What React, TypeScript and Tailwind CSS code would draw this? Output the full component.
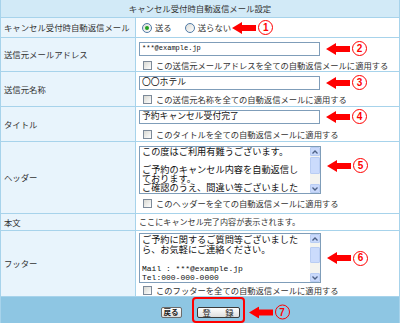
import React from "react";

const BORDER = "border-[#a7d3eb]";

function Arrow() {
  return (
    <svg width="24" height="12" viewBox="0 0 24 12" className="block shrink-0">
      <polygon points="0,6 10,0 10,3 24,3 24,9 10,9 10,12" fill="#ff0000" />
    </svg>
  );
}

function Num({ n }: { n: string }) {
  return (
    <div className="w-[15px] h-[15px] shrink-0 rounded-full border-[1.5px] border-[#ff0000] text-[#ff0000] font-['Liberation_Sans',sans-serif] font-bold text-[10px] leading-none flex items-center justify-center">
      {n}
    </div>
  );
}

function Mark({ n }: { n: string }) {
  return (
    <div className="flex items-center gap-[2px] shrink-0">
      <Arrow />
      <Num n={n} />
    </div>
  );
}

function Checkbox() {
  return (
    <div className="w-[9px] h-[9px] shrink-0 border border-[#7d8a99] bg-gradient-to-br from-[#d8d8d2] to-white" />
  );
}

function CheckRow({ text }: { text: string }) {
  return (
    <div className="flex items-center h-[11px] pl-[4px] gap-[4px] whitespace-nowrap">
      <Checkbox />
      <span className="text-[8.3px] leading-none text-[#333]">{text}</span>
    </div>
  );
}

function Radio({ checked }: { checked?: boolean }) {
  return (
    <div className="w-[10px] h-[10px] shrink-0 rounded-full border border-[#4f7aa6] bg-gradient-to-br from-[#dcdcd7] to-white flex items-center justify-center">
      {checked ? <div className="w-[4px] h-[4px] rounded-full bg-[#21a121]" /> : null}
    </div>
  );
}

function Input({ children, mono }: { children: React.ReactNode; mono?: boolean }) {
  return (
    <div
      className={
        mono
          ? "w-[181px] h-[14px] shrink-0 border border-[#7f9db9] bg-white pl-[2px] flex items-center font-['Liberation_Mono',monospace] text-[7px] text-[#111] leading-none"
          : "w-[181px] h-[14px] shrink-0 border border-[#7f9db9] bg-white pl-[2px] flex items-center text-[8.8px] text-[#111] leading-none"
      }
    >
      {children}
    </div>
  );
}

function Chevron({ up }: { up?: boolean }) {
  return (
    <svg width="6" height="4" viewBox="0 0 6 4" className="block">
      <polyline
        points={up ? "0.5,3.5 3,1 5.5,3.5" : "0.5,0.5 3,3 5.5,0.5"}
        fill="none"
        stroke="#4d6185"
        strokeWidth="1.3"
      />
    </svg>
  );
}

function ScrollBar({ thumb }: { thumb: string }) {
  return (
    <div className="w-[10px] shrink-0 flex flex-col bg-[#f4f4f0]">
      <div className="h-[9px] border border-[#b9cdf3] bg-[#c9d9fb] rounded-[1px] flex items-center justify-center">
        <Chevron up />
      </div>
      <div className="flex-1 flex flex-col">
        <div className={thumb + " border border-[#b9cdf3] bg-[#cbdbfc] rounded-[1px]"} />
      </div>
      <div className="h-[9px] border border-[#b9cdf3] bg-[#c9d9fb] rounded-[1px] flex items-center justify-center">
        <Chevron />
      </div>
    </div>
  );
}

function Row({ label, h, children }: { label: string; h: string; children: React.ReactNode }) {
  return (
    <div className={"flex border-b " + BORDER + " " + h}>
      <div className={"w-[135px] shrink-0 border-r " + BORDER + " bg-[#e8f4fc] flex items-center pl-[3px] text-[8.4px] text-[#333] whitespace-nowrap"}>
        {label}
      </div>
      <div className="flex-1 bg-white">{children}</div>
    </div>
  );
}

export default function App() {
  return (
    <div className={"w-[400px] h-[323px] flex flex-col border-l border-r " + BORDER + " bg-[#e8f4fc] font-['Noto_Sans_CJK_JP',sans-serif] text-[#333] overflow-hidden"}>
      <div className={"h-[18px] shrink-0 border-b " + BORDER + " bg-[#d2eaf7] flex items-center justify-center text-[8.4px] text-[#333]"}>
        キャンセル受付時自動返信メール設定
      </div>

      <Row label="キャンセル受付時自動返信メール" h="h-[20px]">
        <div className="h-full flex items-center pl-[6px] text-[8.4px] whitespace-nowrap">
          <Radio checked />
          <span className="ml-[3px]">送る</span>
          <div className="ml-[13px]"><Radio /></div>
          <span className="ml-[3px]">送らない</span>
          <div className="ml-[1px]"><Mark n="1" /></div>
        </div>
      </Row>

      <Row label="送信元メールアドレス" h="h-[34px]">
        <div className="pl-[3px] pt-[3px] flex flex-col gap-[4px]">
          <div className="flex items-center gap-[6px]">
            <Input mono>***@example.jp</Input>
            <Mark n="2" />
          </div>
          <CheckRow text="この送信元メールアドレスを全ての自動返信メールに適用する" />
        </div>
      </Row>

      <Row label="送信元名称" h="h-[35px]">
        <div className="pl-[3px] pt-[3px] flex flex-col gap-[4px]">
          <div className="flex items-center gap-[6px]">
            <Input>〇〇ホテル</Input>
            <Mark n="3" />
          </div>
          <CheckRow text="この送信元名称を全ての自動返信メールに適用する" />
        </div>
      </Row>

      <Row label="タイトル" h="h-[35px]">
        <div className="pl-[3px] pt-[2px] flex flex-col gap-[5px]">
          <div className="flex items-center gap-[6px]">
            <Input>予約キャンセル受付完了</Input>
            <Mark n="4" />
          </div>
          <CheckRow text="このタイトルを全ての自動返信メールに適用する" />
        </div>
      </Row>

      <Row label="ヘッダー" h="h-[72px]">
        <div className="pl-[3px] pt-[4px] flex flex-col gap-[4px]">
          <div className="flex items-start gap-[6px]">
            <div className="w-[182px] h-[48px] shrink-0 border border-[#7f9db9] bg-white flex">
              <div className="flex-1 overflow-hidden pl-[2px] whitespace-pre text-[9.2px] leading-[9px] text-[#111]">
                {"この度はご利用有難うございます。\n\u00a0\nご予約のキャンセル内容を自動返信し\nております。\nご確認のうえ、間違い等ございました"}
              </div>
              <ScrollBar thumb="mt-[1px] h-[17px]" />
            </div>
            <div className="mt-[12px]"><Mark n="5" /></div>
          </div>
          <CheckRow text="このヘッダーを全ての自動返信メールに適用する" />
        </div>
      </Row>

      <Row label="本文" h="h-[17px]">
        <div className="h-full flex items-center pl-[3px] text-[8.1px] whitespace-nowrap">
          ここにキャンセル完了内容が表示されます。
        </div>
      </Row>

      <Row label="フッター" h="h-[66px]">
        <div className="pl-[3px] pt-[2px] flex flex-col gap-[2px]">
          <div className="flex items-center gap-[6px]">
            <div className="w-[182px] h-[50px] shrink-0 border border-[#7f9db9] bg-white flex">
              <div className="flex-1 overflow-hidden pl-[2px] pt-[1px] text-[#111]">
                <div className="whitespace-pre text-[9.2px] leading-[9.6px]">
                  {"ご予約に関するご質問等ございました\nら、お気軽にご連絡ください。\n\u00a0"}
                </div>
                <div className="whitespace-pre font-['Liberation_Mono',monospace] text-[8px] leading-[9.6px]">
                  {"Mail : ***@example.jp\nTel:000-000-0000"}
                </div>
              </div>
              <ScrollBar thumb="mt-[4px] h-[16px]" />
            </div>
            <Mark n="6" />
          </div>
          <CheckRow text="このフッターを全ての自動返信メールに適用する" />
        </div>
      </Row>

      <div className="flex-1 bg-[#8ec6e3] flex items-center justify-center gap-[15px] pt-[4px]">
        <div className="h-[11px] px-[2px] border border-[#6b6b6b] rounded-[2px] bg-gradient-to-b from-white to-[#dedede] flex items-center text-[7.5px] font-bold text-[#222] leading-none">
          戻る
        </div>
        <div className="relative">
          <div className="h-[11px] w-[43px] border border-[#3a3a3a] rounded-[2px] bg-gradient-to-b from-white to-[#dedede] flex items-center justify-center text-[8.3px] tracking-[3px] pl-[3px] text-[#222] leading-none">
            登　録
          </div>
          <div className="absolute left-[-5px] right-[-5px] top-[-10px] bottom-[-5px] border-2 border-[#ff0000] rounded-[4px]" />
          <div className="absolute left-[calc(100%+9px)] top-1/2 -translate-y-1/2">
            <Mark n="7" />
          </div>
        </div>
      </div>
    </div>
  );
}
